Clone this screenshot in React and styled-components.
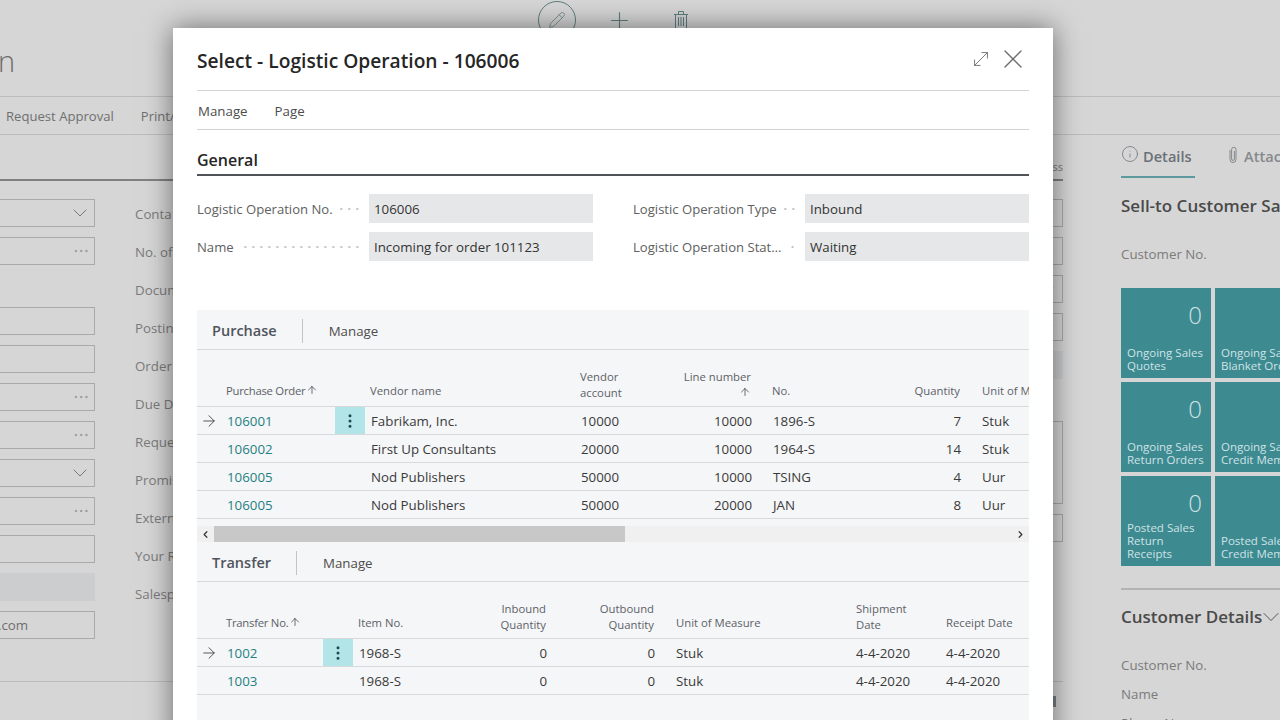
import React from 'react';
import styled, {createGlobalStyle} from 'styled-components';
import {ArrowRight, ArrowUp, ChevronDown, ChevronLeft, ChevronRight, Info, MoreHorizontal, MoreVertical, MoveDiagonal, Pencil, Plus, X} from 'lucide-react';

const GlobalStyle = createGlobalStyle`
    html, body {
        margin: 0;
        height: 100%;
        overflow: hidden;
    }
    body {
        font-family: 'Open Sans', 'Noto Sans', sans-serif;
        font-size: 13.3px;
        color: #333;
    }
`;

const Page = styled.div`
    position: relative;
    width: 1280px;
    height: 720px;
    overflow: hidden;
    background: #d6d6d6;
    color: #7b7b7b;
`;

const TopBar = styled.div`
    height: 40px;
    display: flex;
    align-items: center;
    gap: 24px;
    padding-left: 538px;
    color: #5d7f7d;
`;

const EditCircle = styled.div`
    width: 38px;
    height: 38px;
    box-sizing: border-box;
    border: 1px solid #5d7f7d;
    border-radius: 50%;
    display: flex;
    align-items: center;
    justify-content: center;
`;

const TopIcon = styled.div`
    width: 38px;
    display: flex;
    justify-content: center;
`;

const PageTitle = styled.div`
    height: 56px;
    margin-left: -2px;
    font-size: 29px;
    font-weight: 300;
    line-height: 42px;
    color: #6d6d6d;
`;

const ActionBar = styled.div`
    height: 39px;
    box-sizing: border-box;
    border-top: 1px solid #bcbcbc;
    border-bottom: 1px solid #bcbcbc;
    display: flex;
    align-items: center;
    gap: 27px;
    padding-left: 6px;
    font-size: 13.1px;
    color: #6f6f6f;
`;

const Body = styled.div`
    display: flex;
`;

const Main = styled.div`
    width: 1063px;
    flex-shrink: 0;
`;

const TabHeader = styled.div`
    height: 46px;
    box-sizing: border-box;
    border-bottom: 2px solid #808080;
    padding-top: 24px;
    text-align: right;
    font-size: 11px;
    line-height: 16px;
`;

const FieldArea = styled.div`
    display: flex;
    height: 501px;
    box-sizing: border-box;
    padding-top: 18px;
    border-bottom: 1px solid #bcbcbc;
`;

const FooterMark = styled.div`
    width: 3px;
    height: 11px;
    margin: 14px 0 0 1053px;
    background: #7a8088;
`;

const InputColumn = styled.div`
    width: 95px;
    display: flex;
    flex-direction: column;
    gap: 10px;
`;

const BackInput = styled.div`
    height: 28px;
    flex-shrink: 0;
    box-sizing: border-box;
    border: 1px solid ${({$filled}) => ($filled ? '#cccdce' : '#a9a9a9')};
    border-left: ${({$side}) => ($side ? '1px solid #a9a9a9' : 'none')};
    background: ${({$filled}) => ($filled ? '#cccdce' : 'transparent')};
    display: flex;
    align-items: center;
    justify-content: space-between;
    padding-right: 6px;
    color: #6e6e6e;
`;

const TallInput = styled(BackInput)`
    height: 83px;
`;

const BlankRow = styled.div`
    height: ${({$height}) => $height}px;
    flex-shrink: 0;
`;

const InputText = styled.span`
    margin-left: -2px;
`;

const InputChevron = styled(ChevronDown)`
    margin-right: -4px;
    flex-shrink: 0;
`;

const InputDots = styled(MoreHorizontal)`
    margin-right: -2px;
    flex-shrink: 0;
    color: #8a8a8a;
`;

const LabelColumn = styled.div`
    margin-left: 40px;
    white-space: nowrap;
    display: flex;
    flex-direction: column;
    padding-top: 6px;
`;

const BackLabel = styled.div`
    height: 38px;
    line-height: 18px;
    color: #7b7b7b;
`;

const SideInputs = styled.div`
    margin-left: auto;
    width: 20px;
    display: flex;
    flex-direction: column;
    gap: 10px;
`;

const Side = styled.div`
    margin-left: 58px;
    width: 220px;
    flex-shrink: 0;
    white-space: nowrap;
`;

const Tabs = styled.div`
    height: 43px;
    display: flex;
    gap: 32px;
`;

const TabItem = styled.div`
    height: 43px;
    box-sizing: border-box;
    padding-top: 11px;
    display: flex;
    gap: ${({$active}) => ($active ? '4px' : '5px')};
    font-size: 14.6px;
    font-weight: 600;
    color: ${({$active}) => ($active ? '#6b7078' : '#85888c')};
    border-bottom: ${({$active}) => ($active ? '2px solid #5d9a9f' : 'none')};
    width: ${({$active}) => ($active ? '74px' : 'auto')};
`;

const TabInfo = styled(Info)`
    margin: -1px 0 0 0;
`;

const SideHeading = styled.div`
    font-size: 17px;
    font-weight: 600;
    line-height: 24px;
    color: #4a4a4a;
    margin-top: ${({$top}) => $top}px;
    display: flex;
    align-items: center;
`;

const HeadingChevron = styled(ChevronDown)`
    margin: -4px 0 -4px -5px;
    flex-shrink: 0;
`;

const SideLabel = styled.div`
    margin-top: ${({$top}) => $top}px;
    line-height: 18px;
    color: #7b7b7b;
`;

const TileGrid = styled.div`
    display: grid;
    grid-template-columns: 90px 90px;
    grid-auto-rows: 90px;
    gap: 4px;
    margin-top: 25px;
    padding-bottom: 22px;
    border-bottom: 2px solid #b3b3b3;
`;

const Tile = styled.div`
    background: #3d8a91;
    color: #cfe3e5;
    box-sizing: border-box;
    padding: 11px 6px 6px;
    display: flex;
    flex-direction: column;
    justify-content: space-between;
`;

const TileCount = styled.div`
    font-size: 24px;
    font-weight: 300;
    line-height: 32px;
    text-align: right;
    padding-right: 3px;
`;

const TileLabel = styled.div`
    font-size: 11.5px;
    line-height: 13px;
    white-space: pre;
`;

const Modal = styled.div`
    position: absolute;
    left: 173px;
    top: 28px;
    width: 880px;
    height: 720px;
    box-sizing: border-box;
    padding: 0 24px;
    background: #fff;
    box-shadow: 0 0 26px rgba(0, 0, 0, .5);
    color: #333;
`;

const ModalHeader = styled.div`
    height: 63px;
    box-sizing: border-box;
    border-bottom: 1px solid #d2d2d2;
    display: flex;
    align-items: center;
    justify-content: space-between;
    padding-top: 2px;
`;

const ModalTitle = styled.div`
    font-size: 19.2px;
    font-weight: 600;
    color: #262626;
`;

const ModalActions = styled.div`
    display: flex;
    align-items: center;
    gap: 5px;
    color: #6f6f6f;
    margin-top: -2px;
`;

const MenuBar = styled.div`
    height: 39px;
    box-sizing: border-box;
    border-bottom: 1px solid #d2d2d2;
    display: flex;
    align-items: center;
    gap: 27px;
    padding: 2px 0 0 1px;
    color: #4d4d4d;
`;

const SectionTitle = styled.div`
    margin-top: 18px;
    height: 28px;
    box-sizing: border-box;
    border-bottom: 2px solid #50535a;
    font-size: 16px;
    font-weight: 600;
    line-height: 24px;
    color: #262626;
`;

const FieldGrid = styled.div`
    display: grid;
    grid-template-columns: 396px 396px;
    column-gap: 40px;
    row-gap: 9px;
    margin-top: 18px;
`;

const Field = styled.div`
    display: flex;
    align-items: center;
    height: 29px;
`;

const FieldLabel = styled.div`
    font-size: 13.1px;
    color: #606060;
    white-space: nowrap;
`;

const Leader = styled.div`
    flex: 1;
    height: 2px;
    margin: 0 8px 0 7px;
    background-image: radial-gradient(circle, #c4c4c4 1px, transparent 1px);
    background-size: 8px 2px;
    background-position: right;
`;

const FieldValue = styled.div`
    width: 224px;
    height: 29px;
    box-sizing: border-box;
    padding: 1px 0 0 5px;
    line-height: 29px;
    background: #e6e7e8;
    color: #333;
    flex-shrink: 0;
`;

const Part = styled.div`
    background: #f5f6f7;
    overflow: hidden;
    margin-top: ${({$top}) => $top}px;
`;

const PartBar = styled.div`
    height: 40px;
    box-sizing: border-box;
    border-bottom: 1px solid #d8d9da;
    display: flex;
    align-items: center;
    padding: 2px 0 0 15px;
    color: #4d4d4d;
`;

const PartTitle = styled.div`
    font-size: 14.5px;
    font-weight: 600;
    color: #50545c;
    padding-right: 25px;
    margin-right: 26px;
    line-height: 24px;
    border-right: 1px solid #c4c4c4;
`;

const Row = styled.div`
    display: grid;
    grid-template-columns: ${({$columns}) => $columns};
    height: 28px;
    box-sizing: border-box;
    border-bottom: 1px solid #d8d9da;
    align-items: center;
    width: 900px;
`;

const HeaderRow = styled(Row)`
    height: 57px;
    align-items: end;
`;

const HeadCell = styled.div`
    padding: 0 ${({$right}) => ($right ? '16px' : '5px')} ${({$wrapped}) => ($wrapped ? '5px' : '7px')} 5px;
    text-align: ${({$right}) => ($right ? 'right' : 'left')};
    font-size: 11.3px;
    line-height: 16px;
    color: #5c6168;
    white-space: nowrap;
    overflow: hidden;
`;

const KeyHeadCell = styled(HeadCell)`
    padding-left: 1px;
    letter-spacing: -.25px;
`;

const WideHeadCell = styled(HeadCell)`
    padding-left: 6px;
`;

const SortArrow = styled(ArrowUp).attrs({size: 12, strokeWidth: 1.4})`
    vertical-align: -1px;
    margin-left: 1px;
    color: #333;
`;

const Cell = styled.div`
    padding: 0 ${({$right}) => ($right ? '15px' : '6px')} 0 6px;
    text-align: ${({$right}) => ($right ? 'right' : 'left')};
    color: #3a3a3a;
    white-space: nowrap;
    overflow: hidden;
`;

const ArrowCell = styled.div`
    display: flex;
    justify-content: center;
    padding-right: 4px;
    color: #333;
`;

const LinkCell = styled.div`
    padding-left: 2px;
    color: #1f7f83;
`;

const RowMenu = styled.div`
    height: 27px;
    background: ${({$active}) => ($active ? '#b2e5e8' : 'transparent')};
    display: flex;
    align-items: center;
    justify-content: center;
    color: #1f4a4d;
`;

const ScrollBar = styled.div`
    margin-top: 7px;
    height: 16px;
    background: #f0f0f0;
    display: flex;
    color: #333;
`;

const ScrollEnd = styled.div`
    width: 17px;
    display: flex;
    align-items: center;
    justify-content: center;
    margin-left: ${({$last}) => ($last ? 'auto' : '0')};
`;

const ScrollThumb = styled.div`
    width: 411px;
    background: #c8c8c8;
`;

const Spacer = styled.div`
    height: 80px;
`;

const TrashIcon = () => (
    <svg width='16' height='20' viewBox='0 0 16 20' fill='none' stroke='currentColor' strokeWidth='1'>
        <path d='M1 4.5h14M5.500 4.500V1.500h5v3M2.500 4.500v14h11v-14M5.500 7v9M8 7v9M10.500 7v9' />
    </svg>
);

const ClipIcon = () => (
    <svg width='12' height='18' viewBox='0 0 12 18' fill='none' stroke='currentColor' strokeWidth='1'>
        <path d='M3 4v9.500a3 3 0 0 0 6 0V3.500a2.200 2.200 0 0 0-4.400 0v9.500a1 1 0 0 0 2.800 0V5' />
    </svg>
);

const purchaseColumns = '28px 110px 30px 210px 70px 122px 120px 89px 121px';
const transferColumns = '28px 98px 30px 100px 109px 108px 180px 90px 157px';

const purchaseRows = [
    ['106001', 'Fabrikam, Inc.', '10000', '10000', '1896-S', '7', 'Stuk'],
    ['106002', 'First Up Consultants', '20000', '10000', '1964-S', '14', 'Stuk'],
    ['106005', 'Nod Publishers', '50000', '10000', 'TSING', '4', 'Uur'],
    ['106005', 'Nod Publishers', '50000', '20000', 'JAN', '8', 'Uur'],
];

const transferRows = [
    ['1002', '1968-S', '0', '0', 'Stuk', '4-4-2020', '4-4-2020'],
    ['1003', '1968-S', '0', '0', 'Stuk', '4-4-2020', '4-4-2020'],
];

const backFields = [
    {chevron: true}, {dots: true}, {blank: true}, {}, {}, {dots: true}, {dots: true},
    {chevron: true}, {dots: true}, {}, {filled: true}, {text: '.com'},
];

const backLabels = ['Conta', 'No. of', 'Docum', 'Postin', 'Order', 'Due D', 'Reque', 'Promis', 'Extern', 'Your R', 'Salesp'];

const tiles = [
    ['0', 'Ongoing Sales\nQuotes'],
    ['0', 'Ongoing Sales\nBlanket Orders'],
    ['0', 'Ongoing Sales\nReturn Orders'],
    ['0', 'Ongoing Sales\nCredit Memos'],
    ['0', 'Posted Sales\nReturn\nReceipts'],
    ['0', 'Posted Sales\nCredit Memos'],
];

const RowArrow = ({active}) => (
    <ArrowCell>{active ? <ArrowRight size={18} strokeWidth={1.1} /> : null}</ArrowCell>
);

const SideInput = ({filled}) => (
    <BackInput $side $filled={filled}>
        <span />
        {filled ? null : <ChevronDown size={18} strokeWidth={1} />}
    </BackInput>
);

const Background = () => (
    <>
        <TopBar>
            <EditCircle><Pencil size={18} strokeWidth={1} /></EditCircle>
            <TopIcon><Plus size={27} strokeWidth={1} /></TopIcon>
            <TopIcon><TrashIcon /></TopIcon>
        </TopBar>
        <PageTitle>n</PageTitle>
        <ActionBar>
            <span>Request Approval</span>
            <span>Print/</span>
        </ActionBar>
        <Body>
            <Main>
                <TabHeader>ss</TabHeader>
                <FieldArea>
                    <InputColumn>
                        {backFields.map((field, index) => (field.blank ? <BlankRow key={index} $height={22} /> : (
                            <BackInput key={index} $filled={field.filled}>
                                <InputText>{field.text}</InputText>
                                {field.chevron ? <InputChevron size={24} strokeWidth={0.9} /> : null}
                                {field.dots ? <InputDots size={18} strokeWidth={1} /> : null}
                            </BackInput>
                        )))}
                    </InputColumn>
                    <LabelColumn>
                        {backLabels.map((label) => <BackLabel key={label}>{label}</BackLabel>)}
                    </LabelColumn>
                    <SideInputs>
                        <SideInput />
                        <SideInput />
                        <SideInput />
                        <SideInput />
                        <SideInput filled />
                        <BlankRow $height={22} />
                        <TallInput $side />
                        <SideInput />
                    </SideInputs>
                </FieldArea>
                <FooterMark />
            </Main>
            <Side>
                <Tabs>
                    <TabItem $active><TabInfo size={18} strokeWidth={1} />Details</TabItem>
                    <TabItem><ClipIcon />Attachments</TabItem>
                </Tabs>
                <SideHeading $top={16}>Sell-to Customer Sales History</SideHeading>
                <SideLabel $top={27}>Customer No.</SideLabel>
                <TileGrid>
                    {tiles.map(([count, label]) => (
                        <Tile key={label}>
                            <TileCount>{count}</TileCount>
                            <TileLabel>{label}</TileLabel>
                        </Tile>
                    ))}
                </TileGrid>
                <SideHeading $top={15}>Customer Details<HeadingChevron size={28} strokeWidth={0.8} /></SideHeading>
                <SideLabel $top={27}>Customer No.</SideLabel>
                <SideLabel $top={11}>Name</SideLabel>
                <SideLabel $top={11}>Phone No.</SideLabel>
            </Side>
        </Body>
    </>
);

const Dialog = () => (
    <Modal>
        <ModalHeader>
            <ModalTitle>Select - Logistic Operation - 106006</ModalTitle>
            <ModalActions>
                <MoveDiagonal size={22} strokeWidth={1} />
                <X size={32} strokeWidth={1} />
            </ModalActions>
        </ModalHeader>
        <MenuBar>
            <span>Manage</span>
            <span>Page</span>
        </MenuBar>
        <SectionTitle>General</SectionTitle>
        <FieldGrid>
            <Field><FieldLabel>Logistic Operation No.</FieldLabel><Leader /><FieldValue>106006</FieldValue></Field>
            <Field><FieldLabel>Logistic Operation Type</FieldLabel><Leader /><FieldValue>Inbound</FieldValue></Field>
            <Field><FieldLabel>Name</FieldLabel><Leader /><FieldValue>Incoming for order 101123</FieldValue></Field>
            <Field><FieldLabel>Logistic Operation Stat…</FieldLabel><Leader /><FieldValue>Waiting</FieldValue></Field>
        </FieldGrid>
        <Part $top={49}>
            <PartBar>
                <PartTitle>Purchase</PartTitle>
                <span>Manage</span>
            </PartBar>
            <HeaderRow $columns={purchaseColumns}>
                <span />
                <KeyHeadCell>Purchase Order<SortArrow /></KeyHeadCell>
                <span />
                <HeadCell>Vendor name</HeadCell>
                <HeadCell $wrapped>Vendor<br />account</HeadCell>
                <HeadCell $right $wrapped>Line number<br /><SortArrow /></HeadCell>
                <HeadCell>No.</HeadCell>
                <HeadCell $right>Quantity</HeadCell>
                <WideHeadCell>Unit of Measure</WideHeadCell>
            </HeaderRow>
            {purchaseRows.map(([order, vendor, account, line, no, quantity, unit], index) => (
                <Row key={index} $columns={purchaseColumns}>
                    <RowArrow active={index === 0} />
                    <LinkCell>{order}</LinkCell>
                    <RowMenu $active={index === 0}>{index === 0 ? <MoreVertical size={18} strokeWidth={2} /> : null}</RowMenu>
                    <Cell>{vendor}</Cell>
                    <Cell>{account}</Cell>
                    <Cell $right>{line}</Cell>
                    <Cell>{no}</Cell>
                    <Cell $right>{quantity}</Cell>
                    <Cell>{unit}</Cell>
                </Row>
            ))}
            <ScrollBar>
                <ScrollEnd><ChevronLeft size={11} strokeWidth={2.6} /></ScrollEnd>
                <ScrollThumb />
                <ScrollEnd $last><ChevronRight size={11} strokeWidth={2.6} /></ScrollEnd>
            </ScrollBar>
            <PartBar>
                <PartTitle>Transfer</PartTitle>
                <span>Manage</span>
            </PartBar>
            <HeaderRow $columns={transferColumns}>
                <span />
                <KeyHeadCell>Transfer No.<SortArrow /></KeyHeadCell>
                <span />
                <HeadCell>Item No.</HeadCell>
                <HeadCell $right $wrapped>Inbound<br />Quantity</HeadCell>
                <HeadCell $right $wrapped>Outbound<br />Quantity</HeadCell>
                <WideHeadCell>Unit of Measure</WideHeadCell>
                <WideHeadCell $wrapped>Shipment<br />Date</WideHeadCell>
                <WideHeadCell>Receipt Date</WideHeadCell>
            </HeaderRow>
            {transferRows.map(([no, item, inbound, outbound, unit, shipment, receipt], index) => (
                <Row key={no} $columns={transferColumns}>
                    <RowArrow active={index === 0} />
                    <LinkCell>{no}</LinkCell>
                    <RowMenu $active={index === 0}>{index === 0 ? <MoreVertical size={18} strokeWidth={2} /> : null}</RowMenu>
                    <Cell>{item}</Cell>
                    <Cell $right>{inbound}</Cell>
                    <Cell $right>{outbound}</Cell>
                    <Cell>{unit}</Cell>
                    <Cell>{shipment}</Cell>
                    <Cell>{receipt}</Cell>
                </Row>
            ))}
            <Spacer />
        </Part>
    </Modal>
);

export default function App() {
    return (
        <Page>
            <GlobalStyle />
            <Background />
            <Dialog />
        </Page>
    );
}
